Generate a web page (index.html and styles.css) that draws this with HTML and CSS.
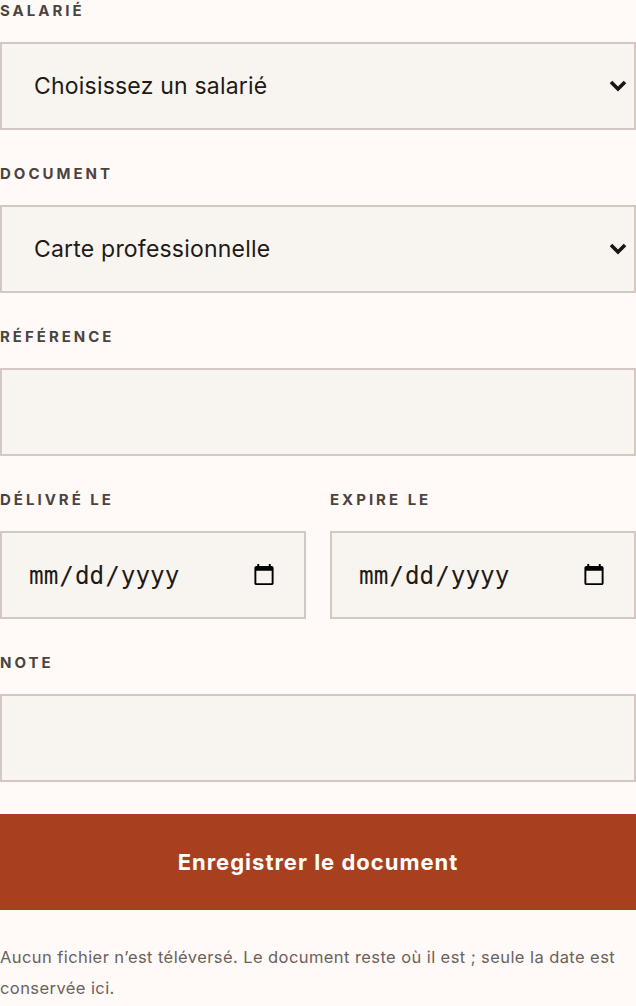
FILE: index.html
```html
<!DOCTYPE html>
<html lang="fr">

<head>
    <meta charset="UTF-8">
    <meta name="viewport" content="width=device-width, initial-scale=1.0">
    <title>Document</title>
    <link rel="stylesheet" href="styles.css">
</head>

<body>
    <form class="doc-form">
        <div class="field">
            <label for="salarie">Salarié</label>
            <div class="select-wrap">
                <select id="salarie">
                    <option>Choisissez un salarié</option>
                </select>
                <svg class="chevron" width="20" height="14" viewBox="0 0 20 14">
                    <polyline points="3,3 10,10 17,3" fill="none" stroke="#1a1512" stroke-width="3.6" />
                </svg>
            </div>
        </div>

        <div class="field">
            <label for="document">Document</label>
            <div class="select-wrap">
                <select id="document">
                    <option>Carte professionnelle</option>
                </select>
                <svg class="chevron" width="20" height="14" viewBox="0 0 20 14">
                    <polyline points="3,3 10,10 17,3" fill="none" stroke="#1a1512" stroke-width="3.6" />
                </svg>
            </div>
        </div>

        <div class="field">
            <label for="reference">Référence</label>
            <input type="text" id="reference">
        </div>

        <div class="row">
            <div class="field">
                <label for="delivre">Délivré le</label>
                <input type="date" id="delivre">
            </div>
            <div class="field">
                <label for="expire">Expire le</label>
                <input type="date" id="expire">
            </div>
        </div>

        <div class="field last">
            <label for="note">Note</label>
            <input type="text" id="note">
        </div>

        <button type="submit" class="save">Enregistrer le document</button>

        <p class="hint">Aucun fichier n’est téléversé. Le document reste où il est ; seule la date est conservée ici.</p>
    </form>
</body>

</html>
```

FILE: styles.css
```css
* {
    padding: 0;
    margin: 0;
    box-sizing: border-box;
}

body {
    background: #fffaf8;
    font-family: Inter, "Liberation Sans", sans-serif;
    color: #1f1a17;
}

.doc-form {
    display: flex;
    flex-direction: column;
    width: 636px;
}

.field {
    display: flex;
    flex-direction: column;
    margin-bottom: 33px;
}

.field.last {
    margin-bottom: 32px;
}

.field label {
    font-size: 15px;
    line-height: 22px;
    font-weight: 700;
    letter-spacing: 0.2em;
    text-transform: uppercase;
    color: #4a4440;
    margin-bottom: 20px;
}

.field select,
.field input {
    height: 88px;
    width: 100%;
    background: #f8f4ef;
    border: 2px solid #d3c8c2;
    border-radius: 0;
    font-family: Inter, "Liberation Sans", sans-serif;
    font-size: 23px;
    letter-spacing: 0.2px;
    color: #1f1a17;
    padding: 0 26px;
    outline: none;
}

.select-wrap {
    position: relative;
}

.field select {
    appearance: none;
    -webkit-appearance: none;
    padding-left: 32px;
    padding-right: 48px;
}

.chevron {
    position: absolute;
    right: 8px;
    top: 37px;
    pointer-events: none;
}

.field input[type="date"] {
    font-family: "DejaVu Sans Mono", monospace;
    font-size: 24.3px;
    letter-spacing: 0;
}

.row {
    display: grid;
    grid-template-columns: 1fr 1fr;
    column-gap: 24px;
}

.save {
    height: 96px;
    background: #a8401f;
    color: #fff;
    border: none;
    font-family: Inter, "Liberation Sans", sans-serif;
    font-size: 22px;
    font-weight: 700;
    letter-spacing: 1px;
    margin-bottom: 32px;
}

.hint {
    font-size: 16.5px;
    line-height: 31px;
    letter-spacing: 0.42px;
    color: #6a625c;
}
```
